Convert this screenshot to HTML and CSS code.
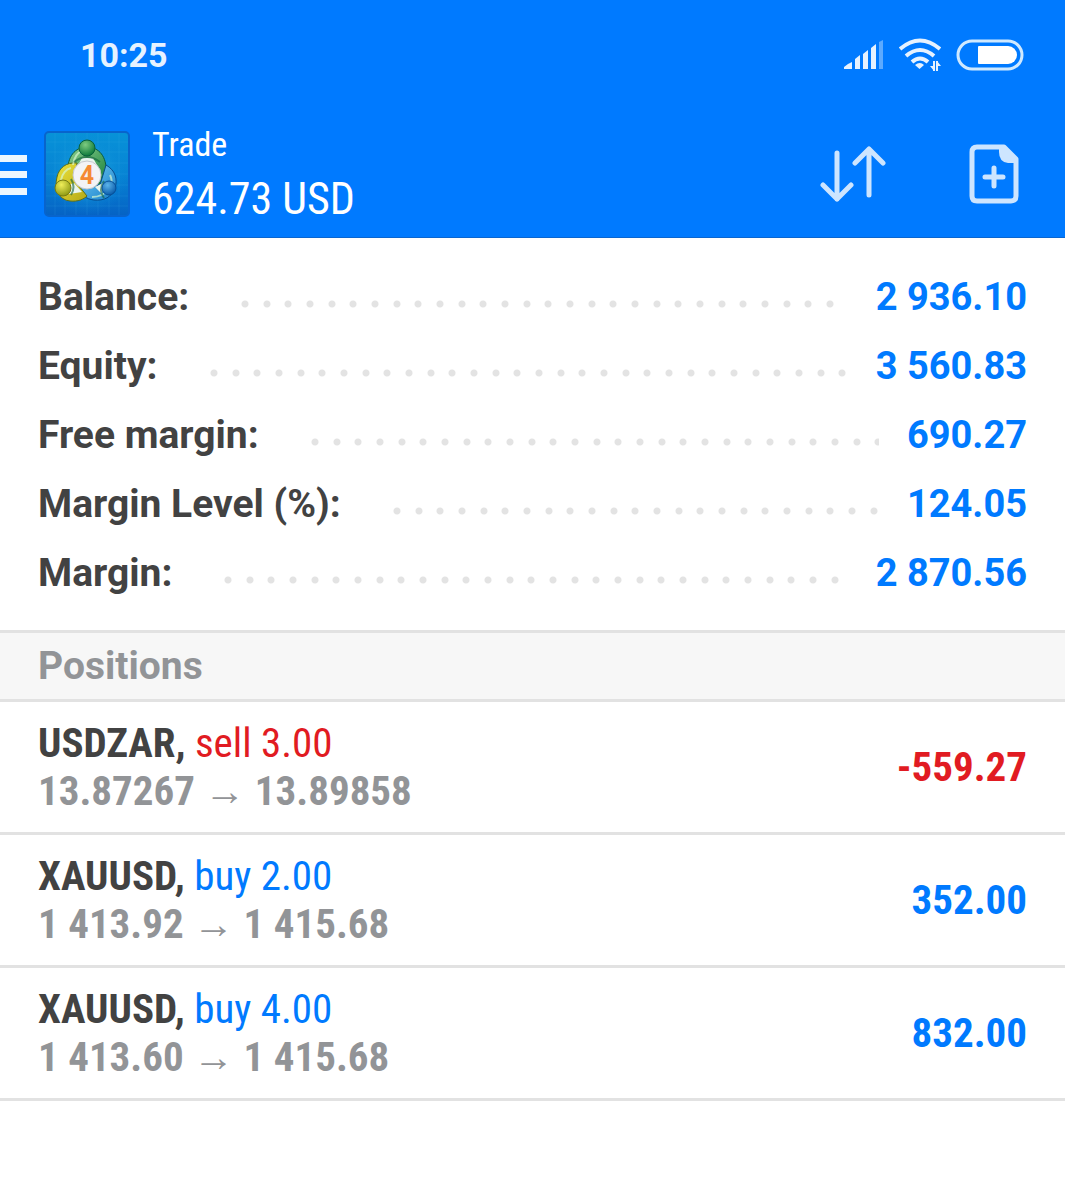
FILE: index.html
```html
<!DOCTYPE html>
<html lang="en">
<head>
    <meta charset="UTF-8">
    <meta name="viewport" content="width=device-width, initial-scale=1.0">
    <title>Trade</title>
    <link rel="stylesheet" href="styles.css">
</head>
<body>
    <header class="header">
        <div class="status-bar">
            <span class="clock">10:25</span>
            <div class="status-icons">
                <svg width="40" height="30" viewBox="0 0 40 30" fill="#e6f2ff">
                    <path d="M0 29v-2q3-3 8-5v7zM11 29V19l5-4v14zM19 29V14l5-4v19zM27 29V8l5-4v25z"/>
                    <path d="M35 29V2l4-2v29z" opacity=".4"/>
                </svg>
                <svg width="42" height="34" viewBox="0 0 42 34" fill="none" stroke="#e6f2ff" stroke-width="4">
                    <path d="M1 11q20-17 40 0M7 18q14-12 28 0M13 24q8-7 16 0"/>
                    <path d="M16 27q5-4 9 0l-4.500 4z" fill="#e6f2ff" stroke="none"/>
                    <path d="M35 23v10M38 23v10" stroke-width="2"/>
                    <path d="M31 28h4v5zM42 28h-4v-5z" fill="#e6f2ff" stroke="none"/>
                </svg>
                <svg width="68" height="32" viewBox="0 0 68 32">
                    <rect x="2" y="2" width="64" height="28" rx="14" fill="none" stroke="#cfe9ff" stroke-width="3"/>
                    <path d="M23 7h29a9 9 0 0 1 0 18H23q-1 0-1-1V8q0-1 1-1z" fill="#fff"/>
                </svg>
            </div>
        </div>
        <div class="app-bar">
            <button class="icon-button menu" aria-label="Menu">
                <svg width="28" height="42" viewBox="0 0 28 42" fill="#ebf6ff">
                    <path d="M0 2h27v7H0zM0 18h27v7H0zM0 35h27v7H0z"/>
                </svg>
            </button>
            <svg class="logo" width="86" height="86" viewBox="0 0 86 86">
                <defs>
                    <linearGradient id="tile" x1="0" y1="0" x2="0" y2="1">
                        <stop offset="0" stop-color="#0792d8"/>
                        <stop offset=".5" stop-color="#0784d4"/>
                        <stop offset="1" stop-color="#0562c4"/>
                    </linearGradient>
                    <radialGradient id="glow">
                        <stop offset="0" stop-color="#27b8e4"/>
                        <stop offset="1" stop-color="#0784d4" stop-opacity="0"/>
                    </radialGradient>
                    <linearGradient id="green" x1="0" y1="0" x2="1" y2="1">
                        <stop offset="0" stop-color="#8fd08e"/>
                        <stop offset="1" stop-color="#16803c"/>
                    </linearGradient>
                    <linearGradient id="yellow" x1="0" y1="0" x2="1" y2="1">
                        <stop offset="0" stop-color="#ece23c"/>
                        <stop offset="1" stop-color="#b5a916"/>
                    </linearGradient>
                    <linearGradient id="blue" x1="0" y1="0" x2="1" y2="1">
                        <stop offset="0" stop-color="#77cdf5"/>
                        <stop offset="1" stop-color="#1680ca"/>
                    </linearGradient>
                    <radialGradient id="greenHead" cx=".4" cy=".3" r=".7">
                        <stop offset="0" stop-color="#7ecb80"/>
                        <stop offset="1" stop-color="#0d7a3a"/>
                    </radialGradient>
                    <radialGradient id="yellowHead" cx=".4" cy=".3" r=".7">
                        <stop offset="0" stop-color="#f0ee5a"/>
                        <stop offset="1" stop-color="#8f9a14"/>
                    </radialGradient>
                    <radialGradient id="blueHead" cx=".4" cy=".3" r=".7">
                        <stop offset="0" stop-color="#5cb4ea"/>
                        <stop offset="1" stop-color="#0a5cab"/>
                    </radialGradient>
                </defs>
                <rect x="1" y="1" width="84" height="84" rx="4" fill="url(#tile)" stroke="#0864cc" stroke-width="2"/>
                <circle cx="43" cy="43" r="42" fill="url(#glow)"/>
                <path d="M11 2v82M21 2v82M32 2v82M43 2v82M54 2v82M65 2v82M75 2v82M2 11h82M2 21h82M2 32h82M2 43h82M2 54h82M2 65h82M2 75h82" stroke="#46c2ee" stroke-opacity=".14"/>
                <path d="M24 41c-1-15 7-25 19-25s20 10 19 25l-2 12H48l-4-21-14 14z" fill="url(#green)" stroke="#0a5a3c"/>
                <path d="M62 34c9 5 12 14 9 23-3 9-11 13-21 12-8-1-13-5-16-12l22-3z" fill="url(#blue)" stroke="#064a8c"/>
                <path d="M33 32c-11-1-18 5-20 14-3 12 2 23 13 24 8 1 14-2 17-5L31 50z" fill="url(#yellow)" stroke="#5b6e18"/>
                <path d="M29 34c1-8 5-13 9-14M17 49c1-6 5-11 10-12M48 66c8 0 13-3 17-8M66 44c2 4 2 7 1 10" fill="none" stroke="#d6f7cf" stroke-opacity=".7" stroke-width="2"/>
                <path d="M38 27h11l4 7H34zM24 54l6-2 8 9-13 2zM51 56l8-4-1 11z" fill="#e9f5ee"/>
                <path d="M30 31q13-10 26 0M27 64q5-8 0-16M60 67q-6-8 0-17" fill="none" stroke="#11603c" stroke-opacity=".6" stroke-width="2"/>
                <circle cx="43" cy="17" r="8" fill="url(#greenHead)" stroke="#08603a"/>
                <circle cx="19" cy="57" r="8" fill="url(#yellowHead)" stroke="#777c12"/>
                <circle cx="65" cy="57" r="7" fill="url(#blueHead)" stroke="#064f98"/>
                <circle cx="43" cy="44" r="14" fill="#f3f3f5" stroke="#c5c8cc"/>
                <text x="43" y="53" text-anchor="middle" class="logo-text">4</text>
            </svg>
            <div class="title">
                <span class="title-name">Trade</span>
                <h1 class="title-amount">624.73 USD</h1>
            </div>
            <button class="icon-button sort" aria-label="Sort">
                <svg width="66" height="58" viewBox="0 0 66 58" fill="none" stroke="#cde5ff" stroke-width="5" stroke-linecap="round" stroke-linejoin="round">
                    <path d="M17 8v46M3 40l14 14 14-14M49 50V4M35 18L49 4l14 14"/>
                </svg>
            </button>
            <button class="icon-button" aria-label="New order">
                <svg width="50" height="60" viewBox="0 0 50 60" fill="none" stroke="#cde5ff" stroke-width="5">
                    <path d="M35 3H8q-5 0-5 5v44q0 5 5 5h34q5 0 5-5V15z" stroke-linejoin="round"/>
                    <path d="M30 3h6l12 11v5h-9q-9-1-9-11z" fill="#cde5ff" stroke="none"/>
                    <path d="M25 24v18M16 33h18" stroke-linecap="round"/>
                </svg>
            </button>
        </div>
    </header>

    <main>
        <dl class="summary">
            <div class="summary-row">
                <dt>Balance:</dt>
                <dd>2 936.10</dd>
            </div>
            <div class="summary-row">
                <dt>Equity:</dt>
                <dd>3 560.83</dd>
            </div>
            <div class="summary-row">
                <dt>Free margin:</dt>
                <dd>690.27</dd>
            </div>
            <div class="summary-row">
                <dt>Margin Level (%):</dt>
                <dd>124.05</dd>
            </div>
            <div class="summary-row">
                <dt>Margin:</dt>
                <dd>2 870.56</dd>
            </div>
        </dl>

        <h2 class="section-title">Positions</h2>
        <ul class="positions">
            <li class="position">
                <div>
                    <div class="symbol">USDZAR, <span class="sell">sell 3.00</span></div>
                    <div class="prices">13.87267 <span class="arrow">→</span> 13.89858</div>
                </div>
                <span class="profit sell">-559.27</span>
            </li>
            <li class="position">
                <div>
                    <div class="symbol">XAUUSD, <span class="buy">buy 2.00</span></div>
                    <div class="prices">1 413.92 <span class="arrow">→</span> 1 415.68</div>
                </div>
                <span class="profit buy">352.00</span>
            </li>
            <li class="position">
                <div>
                    <div class="symbol">XAUUSD, <span class="buy">buy 4.00</span></div>
                    <div class="prices">1 413.60 <span class="arrow">→</span> 1 415.68</div>
                </div>
                <span class="profit buy">832.00</span>
            </li>
        </ul>
    </main>
</body>
</html>
```
FILE: styles.css
```css
* {
    box-sizing: border-box;
}
body {
    margin: 0;
    font-family: Roboto, sans-serif;
    background-color: #fff;
    color: #424242;
}
.header {
    background-color: #007aff;
    border-bottom: 1px solid #0a66d0;
    color: #fff;
}
.status-bar {
    display: flex;
    justify-content: space-between;
    align-items: center;
    height: 110px;
    padding: 0 41px 0 80px;
}
.clock {
    font-size: 34px;
    font-weight: bold;
    color: #e6f2ff;
}
.status-icons {
    display: flex;
    align-items: center;
    gap: 15px;
}
.app-bar {
    display: flex;
    align-items: center;
    height: 127px;
    padding-right: 46px;
}
.icon-button {
    display: flex;
    padding: 0;
    border: none;
    background: none;
    cursor: pointer;
}
.menu {
    margin-right: 16px;
}
.logo {
    flex: none;
}
.logo-text {
    font-size: 25px;
    font-weight: bold;
    fill: #f58a33;
}
.title {
    flex: 1;
    margin-left: 22px;
    padding-bottom: 3px;
    font-family: "Roboto Condensed", Roboto, sans-serif;
}
.title-name {
    display: block;
    font-size: 34px;
    line-height: 54px;
}
.title-amount {
    margin: 0;
    font-size: 44px;
    font-weight: normal;
    line-height: 56px;
}
.sort {
    margin-right: 83px;
}
.summary {
    margin: 0;
    padding: 25px 38px 22px;
    border-bottom: 3px solid #e2e2e2;
    font-size: 39px;
    font-weight: bold;
}
.summary-row {
    display: flex;
    line-height: 69px;
}
.summary-row dt {
    display: flex;
    flex: 1;
}
/* three dots per 65px tile */
.summary-row dt::after {
    content: "";
    flex: 1;
    margin: 0 28px 0 52px;
    background-image:
        radial-gradient(circle at 4px 41px, #e3e3e3 3px, transparent 4px),
        radial-gradient(circle at 26px 41px, #e3e3e3 3px, transparent 4px),
        radial-gradient(circle at 47px 41px, #e3e3e3 3px, transparent 4px);
    background-size: 65px 69px;
}
.summary-row dd {
    margin: 0;
    font-size: 38px;
    color: #007aff;
}
.section-title {
    margin: 0;
    padding: 0 38px;
    border-bottom: 3px solid #e2e2e2;
    background-color: #f7f7f7;
    font-size: 39px;
    line-height: 66px;
    color: #929497;
}
.positions {
    margin: 0;
    padding: 0;
    list-style: none;
    font-family: "Roboto Condensed", Roboto, sans-serif;
    font-size: 41px;
    line-height: 48px;
}
.position {
    display: flex;
    justify-content: space-between;
    align-items: center;
    padding: 17px 38px;
    border-bottom: 3px solid #e2e2e2;
}
.symbol,
.prices,
.profit {
    font-weight: bold;
}
.symbol span {
    font-weight: normal;
}
.prices {
    color: #929497;
}
.arrow {
    font-family: "Liberation Sans", sans-serif;
    font-weight: normal;
    line-height: 1;
}
.sell {
    color: #e11b22;
}
.buy {
    color: #007aff;
}
```
